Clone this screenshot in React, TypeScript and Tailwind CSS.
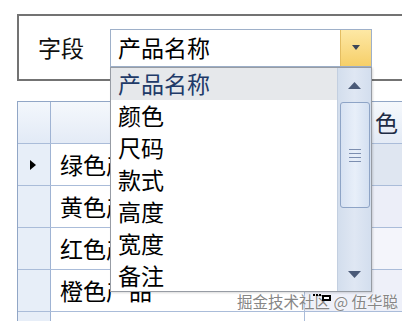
import React from "react";

const font = { fontFamily: '"Noto Sans CJK SC", "Noto Sans", sans-serif' };

function Row({ text, marker, col3, last }: { text: string; marker?: boolean; col3: string; last?: boolean }) {
  return (
    <div className={`flex h-[42px] ${last ? "" : "border-b border-[#aabcd9]"}`}>
      <div className="w-[33px] shrink-0 border-r border-[#9fb3d3] bg-[#e7eef8] flex items-center justify-center">
        {marker && (
          <svg width="6" height="10" viewBox="0 0 6 10" className="ml-[-2px]">
            <path d="M0 0 L6 5 L0 10 Z" fill="#000" />
          </svg>
        )}
      </div>
      <div className="w-[254px] shrink-0 border-r border-[#aabcd9] bg-white flex items-center pl-[9px] text-[23px] leading-none text-black whitespace-nowrap overflow-hidden">
        {text}
      </div>
      <div className={`flex-1 ${col3}`} />
    </div>
  );
}

export default function App() {
  const items = ["颜色", "尺码", "款式", "高度", "宽度", "备注"];
  return (
    <div className="relative w-[402px] h-[321px] overflow-hidden bg-white" style={font}>
      {/* group box */}
      <div className="ml-[17px] mt-[14px] h-[67px] w-[400px] border-y-2 border-l-2 border-[#737373] flex items-center pl-[19px]">
        <span className="text-[23px] leading-none text-[#111]">字段</span>
        <div className="ml-[26px] w-[262px] h-[38px] border border-[#9eb0c9] flex bg-white">
          <div className="flex-1 flex items-center pl-[7px] text-[23px] leading-none text-black">产品名称</div>
          <div className="w-[31px] h-full bg-gradient-to-b from-[#fde8a4] to-[#f6cf68] border-l border-[#e3bd62] flex items-center justify-center">
            <svg width="8" height="5" viewBox="0 0 8 5">
              <path d="M0 0 H8 L4 5 Z" fill="#3c4658" />
            </svg>
          </div>
        </div>
      </div>

      {/* data grid */}
      <div className="mt-[20px] ml-[17px] border-l border-t border-[#91a6c6]">
        <div className="flex h-[42px] border-b border-[#aabcd9]">
          <div className="w-[33px] shrink-0 border-r border-[#9fb3d3] bg-gradient-to-b from-[#f3f7fc] to-[#e2eaf6]" />
          <div className="w-[254px] shrink-0 border-r border-[#aabcd9] bg-gradient-to-b from-[#f5f8fc] to-[#e4ebf6]" />
          <div className="flex-1 bg-gradient-to-b from-[#f5f8fc] to-[#e4ebf6] flex items-center pl-[70px] text-[23px] leading-none text-[#1e2c45] whitespace-nowrap">
            色
          </div>
        </div>
        <Row text="绿色产品" marker col3="bg-[#dfe6f1]" />
        <Row text="黄色产品" col3="bg-[#eceef8]" />
        <Row text="红色产品" col3="bg-[#f4f5fb]" />
        <Row text="橙色产品" col3="bg-[#eef0f9]" />
        <Row text="" col3="bg-white" last />
      </div>

      {/* dropdown list */}
      <div className="absolute left-[110px] top-[67px] w-[262px] h-[225px] border border-[#979ca4] bg-white flex shadow-[1px_1px_2px_rgba(0,0,0,0.15)]">
        <div className="flex-1 flex flex-col">
          <div className="h-[32px] bg-[#e6e8eb] flex items-center pl-[7px] text-[23px] leading-none text-[#213a68]">产品名称</div>
          {items.map((t) => (
            <div key={t} className="h-[32px] flex items-center pl-[7px] text-[23px] leading-none text-black">
              {t}
            </div>
          ))}
        </div>
        <div className="w-[34px] h-full bg-gradient-to-r from-[#d3deed] via-[#dfe7f3] to-[#d3deee] border-l border-[#c3cfe0] flex flex-col items-center">
          <div className="h-[34px] flex items-center justify-center">
            <svg width="13" height="7" viewBox="0 0 13 7">
              <path d="M0 7 L6.5 0 L13 7 Z" fill="#4b5b78" />
            </svg>
          </div>
          <div className="w-[30px] h-[106px] rounded-[3px] border border-[#8ea4c6] bg-gradient-to-r from-[#d7e2f2] via-[#e8eff9] to-[#d4e0f1] flex flex-col items-center justify-center gap-[3px]">
            <div className="w-[12px] h-[1px] bg-[#7c8eb0]" />
            <div className="w-[12px] h-[1px] bg-[#7c8eb0]" />
            <div className="w-[12px] h-[1px] bg-[#7c8eb0]" />
            <div className="w-[12px] h-[1px] bg-[#7c8eb0]" />
          </div>
          <div className="flex-1" />
          <div className="h-[34px] flex items-center justify-center">
            <svg width="13" height="7" viewBox="0 0 13 7">
              <path d="M0 0 L13 0 L6.5 7 Z" fill="#4b5b78" />
            </svg>
          </div>
        </div>
      </div>

      {/* watermark */}
      <div className="absolute left-[237px] top-[294px] flex items-center text-[15.5px] leading-none text-[#868686] whitespace-nowrap [text-shadow:0_0_2px_#fff,0_0_1px_#fff]">
        掘金技术社区 @ 伍华聪
      </div>
      <svg className="absolute left-[313px] top-[294px]" width="18" height="9" viewBox="0 0 18 9">
        <rect x="0" y="0" width="2" height="2" fill="#000" />
        <rect x="3" y="0" width="2" height="2" fill="#000" />
        <rect x="6" y="0" width="2" height="2" fill="#000" />
        <rect x="9" y="1" width="9" height="6" fill="#000" />
        <rect x="11" y="3" width="5" height="2" fill="#fff" />
      </svg>
    </div>
  );
}
